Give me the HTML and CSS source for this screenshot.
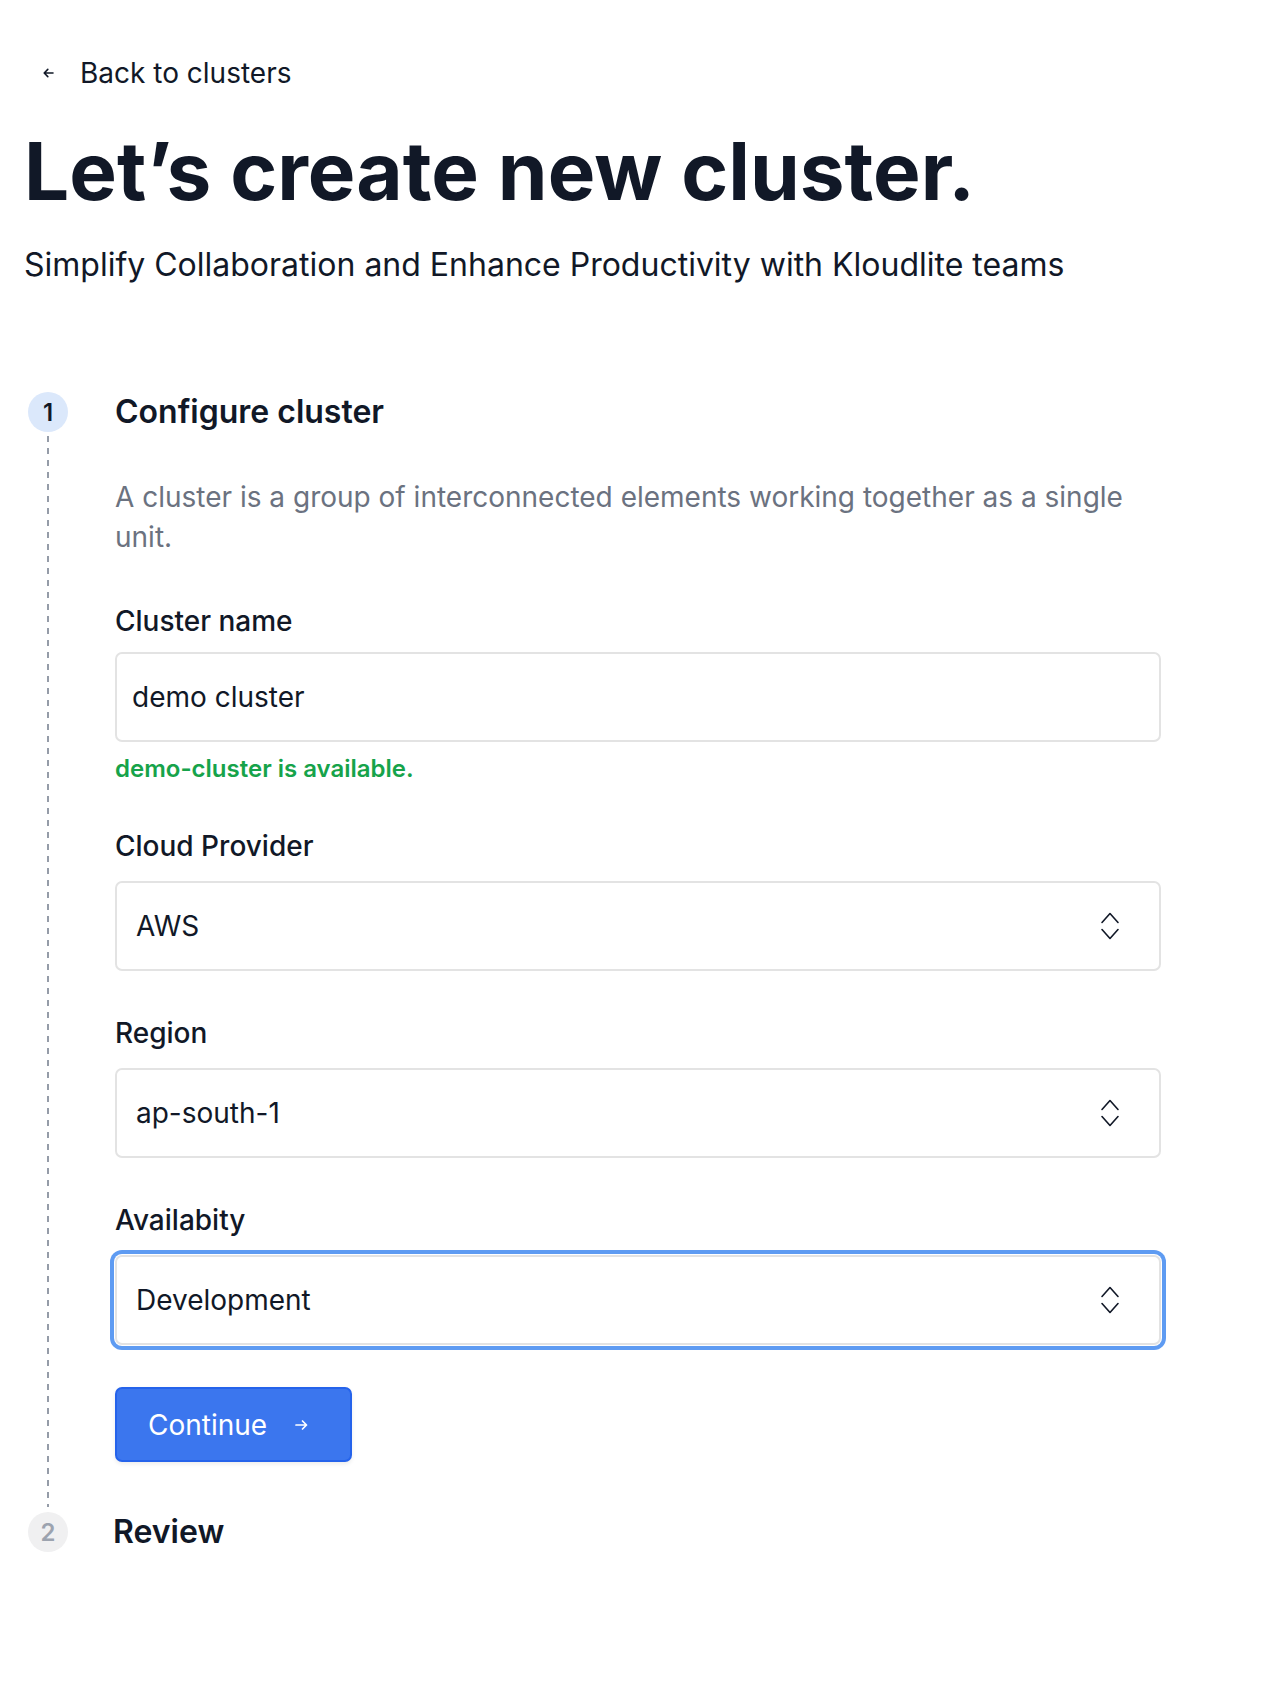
FILE: index.html
```html
<!DOCTYPE html>
<html lang="en">
<head>
<meta charset="utf-8">
<title>Create new cluster</title>
<link rel="stylesheet" href="styles.css">
</head>
<body>
<main class="page">
  <a class="back" href="#">
    <svg class="back-icon" width="11" height="10" viewBox="0 0 11 10" fill="none" stroke="#111827" stroke-width="1.6" stroke-linecap="round" stroke-linejoin="round"><path d="M10 5H1.3M4.8 1.4L1.2 5l3.6 3.6"/></svg>
    <span>Back to clusters</span>
  </a>
  <h1 class="title">Let’s create new cluster.</h1>
  <p class="subtitle">Simplify Collaboration and Enhance Productivity with Kloudlite teams</p>

  <section class="steps">
    <div class="step">
      <div class="rail">
        <div class="badge badge-active">1</div>
        <div class="dash"></div>
      </div>
      <div class="content content-main">
        <h2 class="step-title">Configure cluster</h2>
        <p class="desc">A cluster is a group of interconnected elements working together as a single unit.</p>

        <div class="field field-first">
          <label class="label">Cluster name</label>
          <div class="input"><span>demo cluster</span></div>
          <div class="helper">demo-cluster is available.</div>
        </div>

        <div class="field">
          <label class="label">Cloud Provider</label>
          <div class="select">
            <span>AWS</span>
            <svg class="chev" width="20" height="30" viewBox="0 0 20 30" fill="none" stroke="#111827" stroke-width="1.6" stroke-linecap="round" stroke-linejoin="round"><path d="M2 11.5L10 2.5 18 11.5M2 18.5l8 9 8-9"/></svg>
          </div>
        </div>

        <div class="field">
          <label class="label">Region</label>
          <div class="select">
            <span>ap-south-1</span>
            <svg class="chev" width="20" height="30" viewBox="0 0 20 30" fill="none" stroke="#111827" stroke-width="1.6" stroke-linecap="round" stroke-linejoin="round"><path d="M2 11.5L10 2.5 18 11.5M2 18.5l8 9 8-9"/></svg>
          </div>
        </div>

        <div class="field">
          <label class="label">Availabity</label>
          <div class="select select-focus">
            <span>Development</span>
            <svg class="chev" width="20" height="30" viewBox="0 0 20 30" fill="none" stroke="#111827" stroke-width="1.6" stroke-linecap="round" stroke-linejoin="round"><path d="M2 11.5L10 2.5 18 11.5M2 18.5l8 9 8-9"/></svg>
          </div>
        </div>

        <button class="btn" type="button">
          <span>Continue</span>
          <svg width="13" height="12" viewBox="0 0 13 12" fill="none" stroke="#ffffff" stroke-width="1.7" stroke-linecap="round" stroke-linejoin="round"><path d="M1 6h10.5M7.5 2l4 4-4 4"/></svg>
        </button>
      </div>
    </div>

    <div class="step">
      <div class="rail">
        <div class="badge badge-idle">2</div>
      </div>
      <div class="content">
        <h2 class="step-title step-title-2">Review</h2>
      </div>
    </div>
  </section>
</main>
</body>
</html>
```

FILE: styles.css
```css
* {
  box-sizing: border-box;
}

html, body {
  margin: 0;
  padding: 0;
  background: #ffffff;
}

body {
  font-family: Inter, "Noto Sans", "Liberation Sans", sans-serif;
  color: #111827;
}

.page {
  padding: 55px 24px 80px 24px;
}

.back {
  display: flex;
  align-items: center;
  gap: 26px;
  padding-left: 19px;
  color: #111827;
  text-decoration: none;
  font-size: 28px;
  line-height: 36px;
}

.back-icon {
  display: block;
}

.title {
  margin: 32px 0 0 0;
  font-size: 80px;
  line-height: 96px;
  font-weight: 700;
  letter-spacing: 0;
  color: #111827;
}

.subtitle {
  margin: 26px 0 0 0;
  font-size: 32px;
  line-height: 40px;
  color: #111827;
}

.steps {
  margin-top: 107px;
  display: flex;
  flex-direction: column;
}

.step {
  display: flex;
  gap: 47px;
}

.rail {
  width: 40px;
  margin-left: 4px;
  display: flex;
  flex-direction: column;
  align-items: center;
  flex-shrink: 0;
}

.badge {
  width: 40px;
  height: 40px;
  border-radius: 50%;
  display: flex;
  align-items: center;
  justify-content: center;
  font-size: 24px;
  font-weight: 600;
  flex-shrink: 0;
}

.badge-active {
  background: #dbe8fb;
  color: #111827;
}

.badge-idle {
  background: #f0f0f1;
  color: #9ca3af;
}

.dash {
  flex: 1;
  width: 2px;
  margin-top: 4px;
  margin-bottom: 5px;
  background: repeating-linear-gradient(to bottom, #959ca8 0 6px, transparent 6px 12px);
}

.content {
  flex: 1;
  max-width: 1046px;
}

.content-main {
  padding-bottom: 50px;
}

.step-title {
  margin: 0;
  font-size: 32px;
  line-height: 40px;
  font-weight: 600;
  color: #111827;
}

.step-title-2 {
  margin-left: -2px;
}

.desc {
  margin: 45px 0 0 0;
  font-size: 28px;
  line-height: 40px;
  color: #6b7280;
}

.field {
  margin-top: 45px;
}

.label {
  display: block;
  font-size: 28px;
  line-height: 34px;
  font-weight: 500;
  color: #111827;
}

.input,
.select {
  margin-top: 18px;
  height: 90px;
  border: 2px solid #e3e3e3;
  border-radius: 7px;
  display: flex;
  align-items: center;
  font-size: 28px;
  color: #111827;
  background: #ffffff;
}

.field-first {
  margin-top: 47px;
}

.field-first .input {
  margin-top: 14px;
}

.input {
  padding: 0 15px;
}

.select {
  padding: 0 39px 0 19px;
  justify-content: space-between;
}

.select-focus {
  box-shadow: 0 0 0 1px #ffffff, 0 0 0 5px #5e9bf2;
}

.chev {
  display: block;
}

.helper {
  margin-top: 12px;
  font-size: 24px;
  line-height: 30px;
  font-weight: 600;
  color: #16a34a;
}

.btn {
  margin-top: 42px;
  width: 237px;
  height: 75px;
  display: flex;
  align-items: center;
  gap: 28px;
  padding: 0 0 0 31px;
  border: 2px solid #2563eb;
  border-radius: 7px;
  background: #3b76ee;
  color: #ffffff;
  font-family: Inter, "Noto Sans", sans-serif;
  font-size: 28px;
  font-weight: 400;
  box-shadow: 0 2px 4px rgba(0, 0, 0, 0.08);
  cursor: pointer;
}
```
